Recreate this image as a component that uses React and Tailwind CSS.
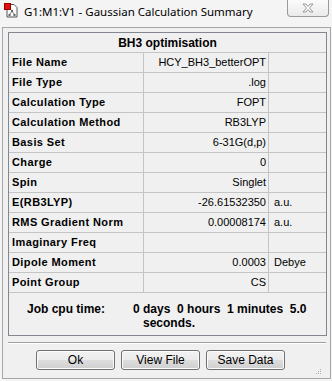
import React from "react";

const rows = [
  { label: "File Name", value: "HCY_BH3_betterOPT", unit: "" },
  { label: "File Type", value: ".log", unit: "" },
  { label: "Calculation Type", value: "FOPT", unit: "" },
  { label: "Calculation Method", value: "RB3LYP", unit: "" },
  { label: "Basis Set", value: "6-31G(d,p)", unit: "" },
  { label: "Charge", value: "0", unit: "" },
  { label: "Spin", value: "Singlet", unit: "" },
  { label: "E(RB3LYP)", value: "-26.61532350", unit: "a.u." },
  { label: "RMS Gradient Norm", value: "0.00008174", unit: "a.u." },
  { label: "Imaginary Freq", value: "", unit: "" },
  { label: "Dipole Moment", value: "0.0003", unit: "Debye" },
  { label: "Point Group", value: "CS", unit: "" },
];

function AppIcon() {
  return (
    <svg width="15" height="15" viewBox="0 0 15 15">
      <path d="M3 1.5h7l3 3v9.5H3z" fill="#fff" stroke="#555" strokeWidth="1" />
      <rect x="0.5" y="0.5" width="6" height="6" fill="#e01010" stroke="#900" strokeWidth="1" />
      <circle cx="8" cy="8" r="1.2" fill="#666" />
      <circle cx="5.5" cy="12" r="1.2" fill="#666" />
      <circle cx="10.5" cy="12" r="1.2" fill="#666" />
      <path d="M8 8L5.5 12M8 8l2.5 4" stroke="#666" strokeWidth="0.8" />
    </svg>
  );
}

function Btn({ children }) {
  return (
    <button className="w-[79px] h-[20px] rounded-[3px] border border-[#707070] bg-[linear-gradient(#f2f2f2_0%,#ebebeb_50%,#dddddd_50%,#cfcfcf_100%)] text-[12px] text-black leading-none shadow-[inset_0_0_0_1px_#fcfcfc]">
      {children}
    </button>
  );
}

export default function App() {
  return (
    <div
      className="w-[332px] h-[381px] bg-[#f4f4f4] relative overflow-hidden"
      style={{ fontFamily: '"Liberation Sans", Arial, sans-serif' }}
    >
      {/* title bar */}
      <div className="h-[27px] flex items-start">
        <div className="pl-[4px] pt-[3px]">
          <AppIcon />
        </div>
        <div
          className="pl-[5px] pt-[3px] text-[11.5px] text-black"
          style={{ fontFamily: '"Noto Sans", sans-serif' }}
        >
          G1:M1:V1 - Gaussian Calculation Summary
        </div>
        <div className="ml-auto mr-[3px] w-[42px] h-[17px] border border-t-0 border-[#9a9a9a] rounded-b-[4px] bg-[linear-gradient(#fbfbfb,#eaeaea)] flex items-center justify-center">
          <svg width="12" height="10" viewBox="0 0 12 10">
            <path
              d="M1 1h3l2 2.5L8 1h3L7.5 5 11 9H8L6 6.5 4 9H1l3.5-4z"
              fill="#fff"
              stroke="#8c8c8c"
              strokeWidth="0.9"
              strokeLinejoin="round"
            />
          </svg>
        </div>
      </div>

      {/* client frame */}
      <div className="mx-[2px] w-[329px] h-[352px] border border-[#a6a6a6] bg-[#f0f0f0] pt-[4px] pl-[5px]">
        <div className="w-[319px] border border-[#828790] text-[11px] text-black">
          <div className="h-[20px] border-b border-[#c4c4c4] flex items-center justify-center font-bold text-[12px]">
            BH3 optimisation
          </div>
          {rows.map((r) => (
            <div key={r.label} className="h-[20px] border-b border-[#c4c4c4] flex">
              <div className="w-[135px] border-r border-[#c4c4c4] pl-[3px] flex items-center font-bold tracking-[0.4px]">
                {r.label}
              </div>
              <div className="w-[125px] border-r border-[#c4c4c4] pr-[2px] flex items-center justify-end">
                {r.value}
              </div>
              <div className="flex-1 pl-[5px] flex items-center">{r.unit}</div>
            </div>
          ))}
          <div className="h-[42px] pt-[9px] font-bold text-[12px] leading-[14px]">
            <div className="flex pl-[18px]">
              <span>Job cpu time:</span>
              <span className="pl-[28px] whitespace-pre">0 days  0 hours  1 minutes  5.0</span>
            </div>
            <div className="text-center pl-[3px]">seconds.</div>
          </div>
        </div>

        <div className="mt-[6px] w-[318px] h-[2px] border-t border-[#a0a0a0] border-b border-b-white" />

        <div className="mt-[6px] pl-[28px] flex gap-[6px]">
          <Btn>Ok</Btn>
          <Btn>View File</Btn>
          <Btn>Save Data</Btn>
        </div>
      </div>

      {/* resize grip */}
      <div className="absolute left-[316px] top-[369px] grid grid-cols-3 gap-[1px]">
        <span className="w-[1px] h-[1px]" />
        <span className="w-[1px] h-[1px]" />
        <span className="w-[1px] h-[1px] bg-[#b0b0b0]" />
        <span className="w-[1px] h-[1px]" />
        <span className="w-[1px] h-[1px] bg-[#b0b0b0]" />
        <span className="w-[1px] h-[1px] bg-[#b0b0b0]" />
        <span className="w-[1px] h-[1px] bg-[#b0b0b0]" />
        <span className="w-[1px] h-[1px] bg-[#b0b0b0]" />
        <span className="w-[1px] h-[1px] bg-[#b0b0b0]" />
      </div>
    </div>
  );
}
